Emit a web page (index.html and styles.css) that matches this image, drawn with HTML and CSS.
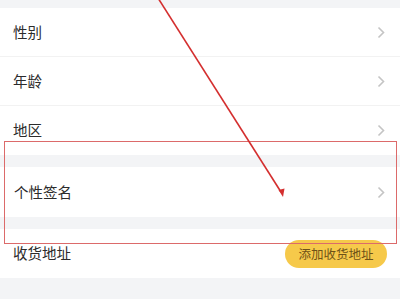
FILE: index.html
```html
<!DOCTYPE html>
<html>
<head>
<meta charset="utf-8">
<link rel="stylesheet" href="styles.css">
</head>
<body>
<div class="page">
  <div class="gap gap-top"></div>
  <div class="group">
    <div class="row sep"><span class="label">性别</span><span class="chev"><svg width="8" height="13" viewBox="0 0 8 13"><path d="M1.5 1.5 L6.5 6.5 L1.5 11.5" fill="none" stroke="#c4c4c4" stroke-width="1.6"/></svg></span></div>
    <div class="row sep"><span class="label">年龄</span><span class="chev"><svg width="8" height="13" viewBox="0 0 8 13"><path d="M1.5 1.5 L6.5 6.5 L1.5 11.5" fill="none" stroke="#c4c4c4" stroke-width="1.6"/></svg></span></div>
    <div class="row"><span class="label">地区</span><span class="chev"><svg width="8" height="13" viewBox="0 0 8 13"><path d="M1.5 1.5 L6.5 6.5 L1.5 11.5" fill="none" stroke="#c4c4c4" stroke-width="1.6"/></svg></span></div>
  </div>
  <div class="gap"></div>
  <div class="group">
    <div class="row row-tall"><span class="label">个性签名</span><span class="chev"><svg width="8" height="13" viewBox="0 0 8 13"><path d="M1.5 1.5 L6.5 6.5 L1.5 11.5" fill="none" stroke="#c4c4c4" stroke-width="1.6"/></svg></span></div>
  </div>
  <div class="gap"></div>
  <div class="group">
    <div class="row"><span class="label">收货地址</span><span class="btn">添加收货地址</span></div>
  </div>
  <div class="gap gap-bottom"></div>

  <div class="mark-box"></div>
  <svg class="mark-arrow" width="400" height="299" viewBox="0 0 400 299">
    <line x1="158" y1="-2" x2="281" y2="192" stroke="#d42f2f" stroke-width="1.6"/>
    <polygon points="283,197 278.5,190 284.5,188.5" fill="#d42f2f"/>
  </svg>
</div>
</body>
</html>
```
FILE: styles.css
```css
html, body {
  margin: 0;
  padding: 0;
  background: #f3f4f6;
}
.page {
  position: relative;
  width: 400px;
  height: 299px;
  overflow: hidden;
  font-family: "Noto Sans CJK SC", "Noto Sans", sans-serif;
  color: #2b2b2b;
}
.gap {
  height: 12px;
  background: #f3f4f6;
}
.gap-top {
  height: 8px;
}
.gap-bottom {
  height: 21px;
}
.group {
  background: #fff;
}
.row {
  height: 49px;
  box-sizing: border-box;
  display: flex;
  align-items: center;
  justify-content: space-between;
  padding: 0 13px 0 13px;
}
.row.sep {
  border-bottom: 1px solid #f2f2f2;
}
.row-tall {
  height: 50px;
  padding-left: 14px;
}
.label {
  font-size: 14.5px;
  line-height: 1;
  color: #2b2b2b;
}
.chev {
  display: flex;
  margin-right: 2px;
}
.btn {
  height: 28px;
  width: 102px;
  border-radius: 14px;
  background: #f6c94a;
  color: #6e5218;
  font-size: 12.5px;
  display: flex;
  align-items: center;
  justify-content: center;
}
.mark-box {
  position: absolute;
  left: 4px;
  top: 141px;
  width: 393px;
  height: 103px;
  box-sizing: border-box;
  border: 1.5px solid #dc6a6a;
}
.mark-arrow {
  position: absolute;
  left: 0;
  top: 0;
}
```
